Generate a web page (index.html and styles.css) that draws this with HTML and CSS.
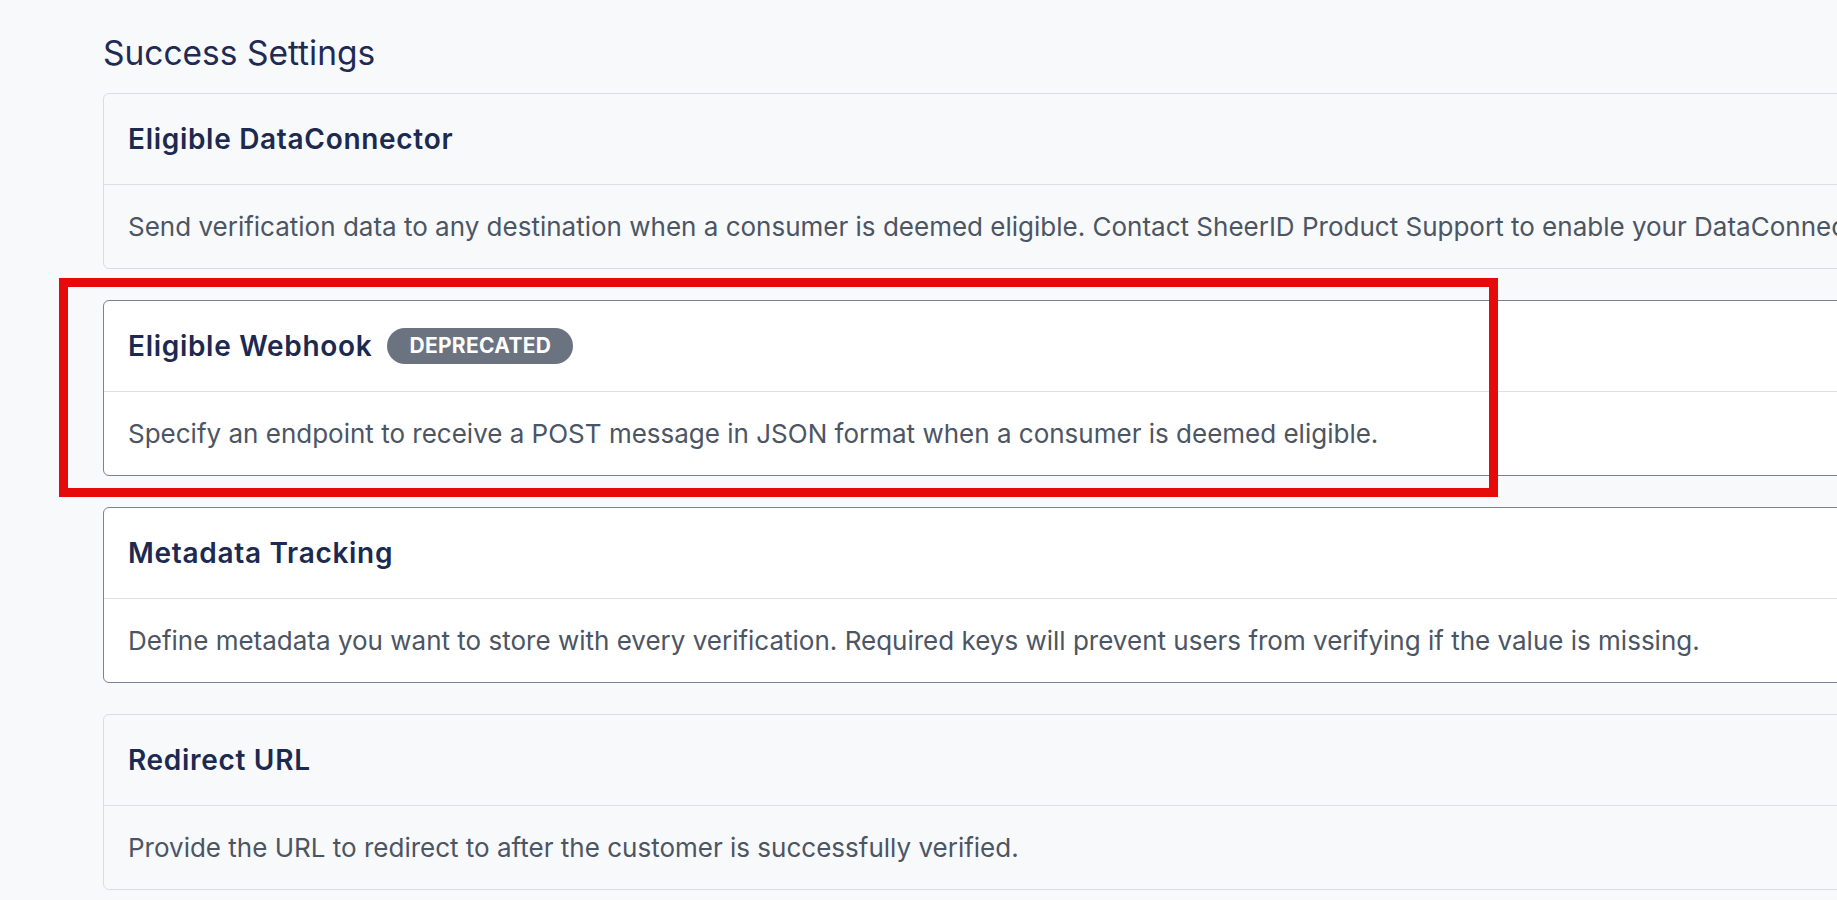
FILE: index.html
```html
<!DOCTYPE html>
<html lang="en">
<head>
  <meta charset="UTF-8">
  <title>Success Settings</title>
  <link rel="stylesheet" href="styles.css">
</head>
<body>

  <div class="page">
    <h1>Success Settings</h1>

    <div class="card-list">
      <div class="card">
        <div class="card-head">
          <h3>Eligible DataConnector</h3>
        </div>
        <div class="card-body">
          Send verification data to any destination when a consumer is deemed eligible. Contact SheerID Product Support to enable your DataConnector.
        </div>
      </div>

      <div class="card active">
        <div class="card-head">
          <h3>Eligible Webhook</h3>
          <span class="badge">Deprecated</span>
        </div>
        <div class="card-body">
          Specify an endpoint to receive a POST message in JSON format when a consumer is deemed eligible.
        </div>
      </div>

      <div class="card active">
        <div class="card-head">
          <h3>Metadata Tracking</h3>
        </div>
        <div class="card-body">
          Define metadata you want to store with every verification. Required keys will prevent users from verifying if the value is missing.
        </div>
      </div>

      <div class="card">
        <div class="card-head">
          <h3>Redirect URL</h3>
        </div>
        <div class="card-body">
          Provide the URL to redirect to after the customer is successfully verified.
        </div>
      </div>
    </div>

    <!-- annotation box drawn over the webhook card -->
    <div class="highlight"></div>
  </div>

</body>
</html>
```

FILE: styles.css
```css
body {
  font-family: Inter, "Noto Sans", Arial, sans-serif;
  background: #f8f9fb;
  margin: 0;
  overflow: hidden;
}

.page {
  position: relative;
  width: 1900px;
  padding: 32px 0 0 103px;
}

h1 {
  font-size: 33.5px;
  font-weight: 400;
  line-height: 42px;
  color: #1f2a55;
  margin: 0 0 19px;
}

.card-list {
  display: flex;
  flex-direction: column;
  gap: 31px;
}

.card {
  border: 1px solid #d9dce2;
  border-radius: 6px;
  background: #f8f9fb;
}

.card.active {
  background: #fff;
  border-color: #7c8291;
}

.card-head {
  height: 90px;
  display: flex;
  align-items: center;
  gap: 15px;
  padding: 0 24px;
  border-bottom: 1px solid #dcdfe4;
}

h3 {
  margin: 0;
  font-size: 28px;
  font-weight: 600;
  letter-spacing: 0.7px;
  color: #1c2951;
}

.badge {
  background: #6b7280;
  color: white;
  font-size: 21px;
  font-weight: 700;
  text-transform: uppercase;
  letter-spacing: 0.3px;
  padding: 0 22px;
  height: 36px;
  line-height: 36px;
  border-radius: 18px;
}

.card-body {
  height: 83px;
  display: flex;
  align-items: center;
  padding: 0 24px;
  font-size: 26px;
  color: #4b5563;
  white-space: nowrap;
}

.highlight {
  position: absolute;
  left: 59px;
  top: 278px;
  width: 1421px;
  height: 201px;
  border: 9px solid #e60a0a;
}
```
